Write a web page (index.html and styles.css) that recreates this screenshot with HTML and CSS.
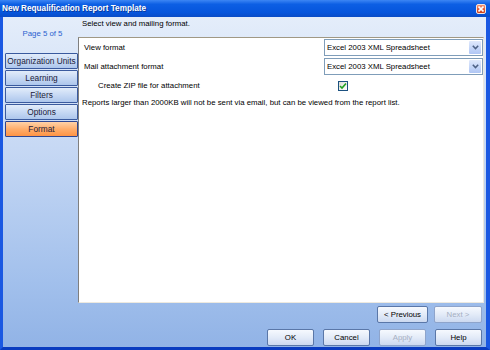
FILE: index.html
```html
<!DOCTYPE html>
<html lang="en">
<head>
  <meta charset="UTF-8">
  <title>New Requalification Report Template</title>
  <link rel="stylesheet" href="styles.css">
</head>
<body>
  <div class="window">
    <div class="titlebar">
      <span class="title">New Requalification Report Template</span>
      <span class="close-btn">
        <svg width="6" height="6" viewBox="0 0 6 6"><path d="M0.5 0.5 L5.5 5.5 M5.5 0.5 L0.5 5.5" stroke="#fff" stroke-width="1.6"/></svg>
      </span>
    </div>

    <div class="frame">
      <div class="body">
        <div class="sidebar">
          <div class="page-count">Page 5 of 5</div>
          <div class="nav">
            <div class="nav-item">Organization Units</div>
            <div class="nav-item">Learning</div>
            <div class="nav-item">Filters</div>
            <div class="nav-item">Options</div>
            <div class="nav-item active">Format</div>
          </div>
        </div>

        <div class="step-header">Select view and mailing format.</div>

        <div class="panel">
          <div class="field-grid">
            <div class="field-label">View format</div>
            <div class="combo">
              <span class="combo-text">Excel 2003 XML Spreadsheet</span>
              <span class="combo-arrow">
                <svg width="7" height="5" viewBox="0 0 7 5"><path d="M0.8 0.8 L3.5 3.6 L6.2 0.8" fill="none" stroke="#4D6185" stroke-width="1.5"/></svg>
              </span>
            </div>

            <div class="field-label">Mail attachment format</div>
            <div class="combo">
              <span class="combo-text">Excel 2003 XML Spreadsheet</span>
              <span class="combo-arrow">
                <svg width="7" height="5" viewBox="0 0 7 5"><path d="M0.8 0.8 L3.5 3.6 L6.2 0.8" fill="none" stroke="#4D6185" stroke-width="1.5"/></svg>
              </span>
            </div>

            <div class="field-label indent">Create ZIP file for attachment</div>
            <div class="check-cell">
              <span class="checkbox">
                <svg width="8" height="8" viewBox="0 0 8 8"><path d="M1 4 L3 6 L7 1.5" fill="none" stroke="#21A121" stroke-width="1.6"/></svg>
              </span>
            </div>
          </div>
          <div class="note">Reports larger than 2000KB will not be sent via email, but can be viewed from the report list.</div>
        </div>

        <div class="buttons">
          <div class="button-row">
            <button class="btn wide">&lt; Previous</button>
            <button class="btn next" disabled>Next &gt;</button>
          </div>
          <div class="button-row main-row">
            <button class="btn">OK</button>
            <button class="btn">Cancel</button>
            <button class="btn" disabled>Apply</button>
            <button class="btn">Help</button>
          </div>
        </div>
      </div>
    </div>
  </div>
</body>
</html>
```

FILE: styles.css
```css
html, body {
  margin: 0;
  padding: 0;
  width: 490px;
  height: 350px;
  overflow: hidden;
  font-family: 'Liberation Sans', Arial, sans-serif;
  font-size: 7.8px;
  color: #000;
}

.window {
  width: 490px;
  height: 350px;
  display: flex;
  flex-direction: column;
}

/* XP style caption */
.titlebar {
  height: 17px;
  flex: none;
  display: flex;
  align-items: center;
  justify-content: space-between;
  padding: 0 4px 0 2px;
  background: linear-gradient(180deg, #3C86F4 0%, #0D5FE4 25%, #0655DC 75%, #0A4CC6 100%);
}

.title {
  color: white;
  font-weight: bold;
  font-size: 8.2px;
  line-height: 17px;
  text-shadow: 1px 1px 0 #0B3A9C;
}

.close-btn {
  width: 10px;
  height: 10px;
  box-sizing: border-box;
  border: 1px solid #F4E4DC;
  border-radius: 2px;
  background: linear-gradient(180deg, #F39375 0%, #E0532D 60%, #CC3F1A 100%);
  display: flex;
  align-items: center;
  justify-content: center;
  margin-top: 1px;
}

.close-btn svg {
  display: block;
}

.frame {
  flex: 1;
  border-left: 3px solid #1A58E2;
  border-right: 4px solid #1A58E2;
  border-bottom: 3px solid #0A3CC0;
  display: flex;
}

.body {
  flex: 1;
  display: grid;
  grid-template-columns: 75px 406px;
  grid-template-rows: 20px 266px 1fr;
  background: linear-gradient(180deg, #E4EDFA 0%, #C6D8F4 40%, #A2C0EC 80%, #91B3E6 100%);
}

.sidebar {
  grid-column: 1;
  grid-row: 1 / 3;
  padding-top: 12px;
  padding-left: 2px;
}

.page-count {
  color: #2A5FCF;
  text-align: center;
  line-height: 10px;
  height: 10px;
  margin-bottom: 14px;
  padding-left: 2px;
}

.nav {
  display: flex;
  flex-direction: column;
  gap: 1px;
}

.nav-item {
  height: 16px;
  box-sizing: border-box;
  border: 1px solid #3A5A9E;
  border-radius: 1px;
  background: linear-gradient(180deg, #E2ECFA 0%, #C7D9F4 50%, #ADC6EC 100%);
  color: #1B1B3A;
  font-size: 8.3px;
  line-height: 14px;
  text-align: center;
}

.nav-item.active {
  border-color: #2F4690;
  background: linear-gradient(180deg, #FFD2A8 0%, #FFAE6C 50%, #FF9444 100%);
}

.step-header {
  grid-column: 2;
  grid-row: 1;
  padding-left: 4px;
  padding-top: 2px;
  line-height: 10px;
}

.panel {
  grid-column: 2;
  grid-row: 2;
  box-sizing: border-box;
  background: white;
  border-top: 1px solid #A09884;
  border-left: 1px solid #7F7F7F;
  border-right: 1px solid #EDE9DF;
  border-bottom: 1px solid #EDE9DF;
  padding-top: 1px;
}

.field-grid {
  display: grid;
  grid-template-columns: 245px 159px;
  grid-auto-rows: 17px;
  row-gap: 2px;
}

.field-label {
  padding-left: 5px;
  display: flex;
  align-items: center;
}

.field-label.indent {
  padding-left: 19px;
}

.field-grid .indent,
.field-grid .check-cell {
  margin-top: 3px;
  height: 11px;
}

.combo {
  display: flex;
  align-items: stretch;
  box-sizing: border-box;
  border: 1px solid #7F9DB9;
  background: white;
}

.combo-text {
  flex: 1;
  padding-left: 2px;
  display: flex;
  align-items: center;
}

.combo-arrow {
  width: 12px;
  margin: 1px;
  border-radius: 1px;
  background: linear-gradient(180deg, #E0E9FC 0%, #C2D4F8 60%, #B0C6F4 100%);
  display: flex;
  align-items: center;
  justify-content: center;
}

.check-cell {
  padding-left: 14px;
  display: flex;
  align-items: center;
}

.checkbox {
  width: 10px;
  height: 10px;
  box-sizing: border-box;
  border: 1px solid #1C5180;
  background: linear-gradient(135deg, #DCDCD6 0%, #FFFFFF 100%);
  display: flex;
  align-items: center;
  justify-content: center;
}

.note {
  padding-left: 3px;
  margin-top: 4px;
  line-height: 10px;
}

.buttons {
  grid-column: 1 / 3;
  grid-row: 3;
  padding-top: 3px;
  padding-right: 2px;
  display: flex;
  flex-direction: column;
  align-items: flex-end;
  gap: 6px;
}

.button-row {
  display: flex;
  gap: 6px;
}

.main-row {
  gap: 9px;
}

.btn {
  width: 47px;
  height: 17px;
  padding: 0;
  box-sizing: border-box;
  border: 1px solid #5A77A8;
  border-radius: 2px;
  background: linear-gradient(180deg, #F6F9FE 0%, #E3EBF8 50%, #CCD9F0 100%);
  font-family: 'Liberation Sans', Arial, sans-serif;
  font-size: 7.8px;
  color: #000;
}

.btn.wide {
  width: 51px;
}

.btn.next {
  width: 48px;
}

.btn:disabled {
  color: #A6AFC2;
  border-color: #8EA4CB;
}
```
